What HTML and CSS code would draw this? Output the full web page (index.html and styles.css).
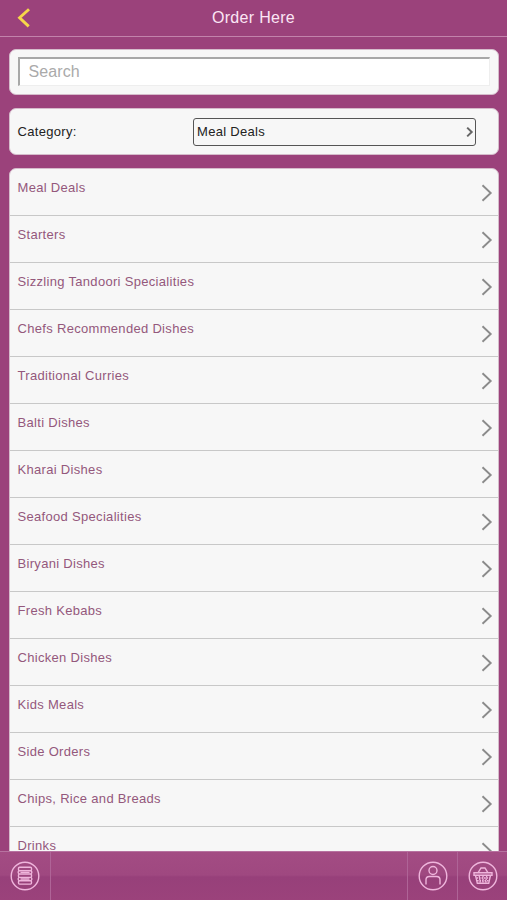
FILE: index.html
```html
<!doctype html>
<html>

<head>
  <meta charset="utf-8">
  <title>Order Here</title>
  <link rel="stylesheet" href="styles.css">
</head>

<body>
  <svg class="sprite">
    <symbol id="arrow" viewBox="0 0 12 18">
      <path d="M1.5 1.2L9.7 9L1.5 16.8" fill="none" stroke="#8b8b8b" stroke-width="1.9"/>
    </symbol>
  </svg>
  <header class="header">
    <a class="back" href="#">
      <svg width="14" height="20" viewBox="0 0 14 20">
        <path d="M12 1.2L2.6 9.8L11.7 18.4" fill="none" stroke="#f6d64a" stroke-width="2.9"/>
      </svg>
    </a>
    <h1 class="title">Order Here</h1>
  </header>

  <main class="content">
    <form class="panel search">
      <input type="text" class="search-input" placeholder="Search">
    </form>
    <div class="panel category">
      <span class="category-label">Category:</span>
      <button type="button" class="select">
        <span>Meal Deals</span>
        <svg width="8" height="12" viewBox="0 0 8 12">
          <path d="M1.2 1.6L5.7 6L1.2 10.4" fill="none" stroke="#666" stroke-width="2"/>
        </svg>
      </button>
    </div>
    <ul class="menu">
      <li class="item"><span>Meal Deals</span><svg class="arrow"><use href="#arrow"/></svg></li>
      <li class="item"><span>Starters</span><svg class="arrow"><use href="#arrow"/></svg></li>
      <li class="item"><span>Sizzling Tandoori Specialities</span><svg class="arrow"><use href="#arrow"/></svg></li>
      <li class="item"><span>Chefs Recommended Dishes</span><svg class="arrow"><use href="#arrow"/></svg></li>
      <li class="item"><span>Traditional Curries</span><svg class="arrow"><use href="#arrow"/></svg></li>
      <li class="item"><span>Balti Dishes</span><svg class="arrow"><use href="#arrow"/></svg></li>
      <li class="item"><span>Kharai Dishes</span><svg class="arrow"><use href="#arrow"/></svg></li>
      <li class="item"><span>Seafood Specialities</span><svg class="arrow"><use href="#arrow"/></svg></li>
      <li class="item"><span>Biryani Dishes</span><svg class="arrow"><use href="#arrow"/></svg></li>
      <li class="item"><span>Fresh Kebabs</span><svg class="arrow"><use href="#arrow"/></svg></li>
      <li class="item"><span>Chicken Dishes</span><svg class="arrow"><use href="#arrow"/></svg></li>
      <li class="item"><span>Kids Meals</span><svg class="arrow"><use href="#arrow"/></svg></li>
      <li class="item"><span>Side Orders</span><svg class="arrow"><use href="#arrow"/></svg></li>
      <li class="item"><span>Chips, Rice and Breads</span><svg class="arrow"><use href="#arrow"/></svg></li>
      <li class="item"><span>Drinks</span><svg class="arrow"><use href="#arrow"/></svg></li>
    </ul>
  </main>

  <footer class="footer">
    <a class="tab tab-menu" href="#">
      <svg class="icon" viewBox="0 0 30 30">
        <circle cx="15" cy="15" r="13.8"/>
        <rect x="8.5" y="6.3" width="13" height="3.4" rx="1"/>
        <rect x="8.5" y="13" width="13" height="3.4" rx="1"/>
        <rect x="8.5" y="19.7" width="13" height="3.4" rx="1"/>
        <path d="M9 9.7Q7.3 11.3 9 13M21 9.7Q22.7 11.3 21 13M9 16.4Q7.3 18 9 19.7M21 16.4Q22.7 18 21 19.7M10.5 11.4H19.5M10.5 18H19.5"/>
      </svg>
    </a>
    <a class="tab tab-user" href="#">
      <svg class="icon" viewBox="0 0 30 30">
        <circle cx="15" cy="15" r="13.8"/>
        <circle cx="15" cy="9.5" r="4"/>
        <path d="M8 23.5V18.8Q8 15.5 11.3 15.5H18.7Q22 15.5 22 18.8V23.5"/>
      </svg>
    </a>
    <a class="tab tab-basket" href="#">
      <svg class="icon" viewBox="0 0 30 30">
        <circle cx="15" cy="15" r="13.8"/>
        <path d="M6 11.8H24V14.3H6zM7.5 14.3L9.3 22.3H20.7L22.5 14.3M10 11.8L13 7H17L20 11.8"/>
        <path d="M11.3 15L12.3 22M15 15V22M18.7 15L17.7 22M8.5 17H21.5M9 19.8H21" stroke-dasharray="1.6 0.9"/>
      </svg>
    </a>
  </footer>
</body>

</html>
```

FILE: styles.css
```css
* {
  box-sizing: border-box;
}

body {
  background: #9b427b;
  display: flex;
  flex-direction: column;
  font-family: "Liberation Sans", Arial, sans-serif;
  font-size: 13px;
  height: 100vh;
  letter-spacing: 0.31px;
  margin: 0;
  overflow: hidden;
}

.sprite {
  display: none;
}

.header {
  align-items: center;
  border-bottom: 1px solid #c283ab;
  display: grid;
  flex: none;
  grid-template-columns: 50px 1fr 50px;
  height: 37px;
}

.back {
  height: 20px;
  margin-left: 17px;
}

.title {
  color: #fbe6f5;
  font-size: 16px;
  font-weight: normal;
  letter-spacing: 0.3px;
  margin: 0;
  text-align: center;
}

.content {
  display: flex;
  flex: 1;
  flex-direction: column;
  gap: 13px;
  min-height: 0;
  overflow: hidden;
  padding: 12px 8px 0 8.5px;
}

.panel {
  background: #f7f7f7;
  border: 1px solid #d5bccb;
  border-radius: 7px;
  flex: none;
}

.search {
  height: 46px;
  padding: 7px 8px;
}

.search-input {
  background: #fff;
  border: 1px solid #eee;
  border-left: 2px solid #a8a8a8;
  border-top: 2px solid #a8a8a8;
  display: block;
  font: inherit;
  font-size: 16px;
  height: 29px;
  letter-spacing: 0.1px;
  outline: none;
  padding: 0 9px;
  width: 100%;
}

.search-input::placeholder {
  color: #aaa;
}

.category {
  align-items: center;
  color: #222;
  display: flex;
  height: 47px;
  justify-content: space-between;
  padding: 0 22px 0 8px;
}

.select {
  align-items: center;
  background: #f7f7f7;
  border: 1px solid #555;
  border-radius: 3px;
  color: #222;
  display: flex;
  font: inherit;
  height: 28px;
  justify-content: space-between;
  letter-spacing: inherit;
  padding: 0 1px 0 3px;
  width: 283px;
}

.menu {
  background: #f7f7f7;
  border: 1px solid #d5bccb;
  border-radius: 7px 7px 0 0;
  flex: none;
  list-style: none;
  margin: 0;
  padding: 0;
}

.item {
  border-bottom: 1px solid #c8c8c8;
  color: #94587c;
  display: flex;
  height: 47px;
  justify-content: space-between;
  line-height: 16px;
  padding: 11px 5px 0 8px;
}

.arrow {
  height: 18px;
  margin-top: 4px;
  width: 12px;
}

.footer {
  background: linear-gradient(#a34c83, #9f4880 48%, #97407a 52%, #9b427b);
  border-top: 1px solid #b772a0;
  display: flex;
  flex: none;
  height: 49px;
}

.tab {
  align-items: center;
  display: flex;
  justify-content: center;
  width: 50px;
}

.tab-menu {
  border-right: 1px solid #af6497;
  margin-right: auto;
  width: 51px;
}

.tab-user,
.tab-basket {
  border-left: 1px solid #af6497;
}

.icon {
  fill: none;
  height: 30px;
  stroke: #efb5dc;
  stroke-width: 1.4;
  width: 30px;
}
```
